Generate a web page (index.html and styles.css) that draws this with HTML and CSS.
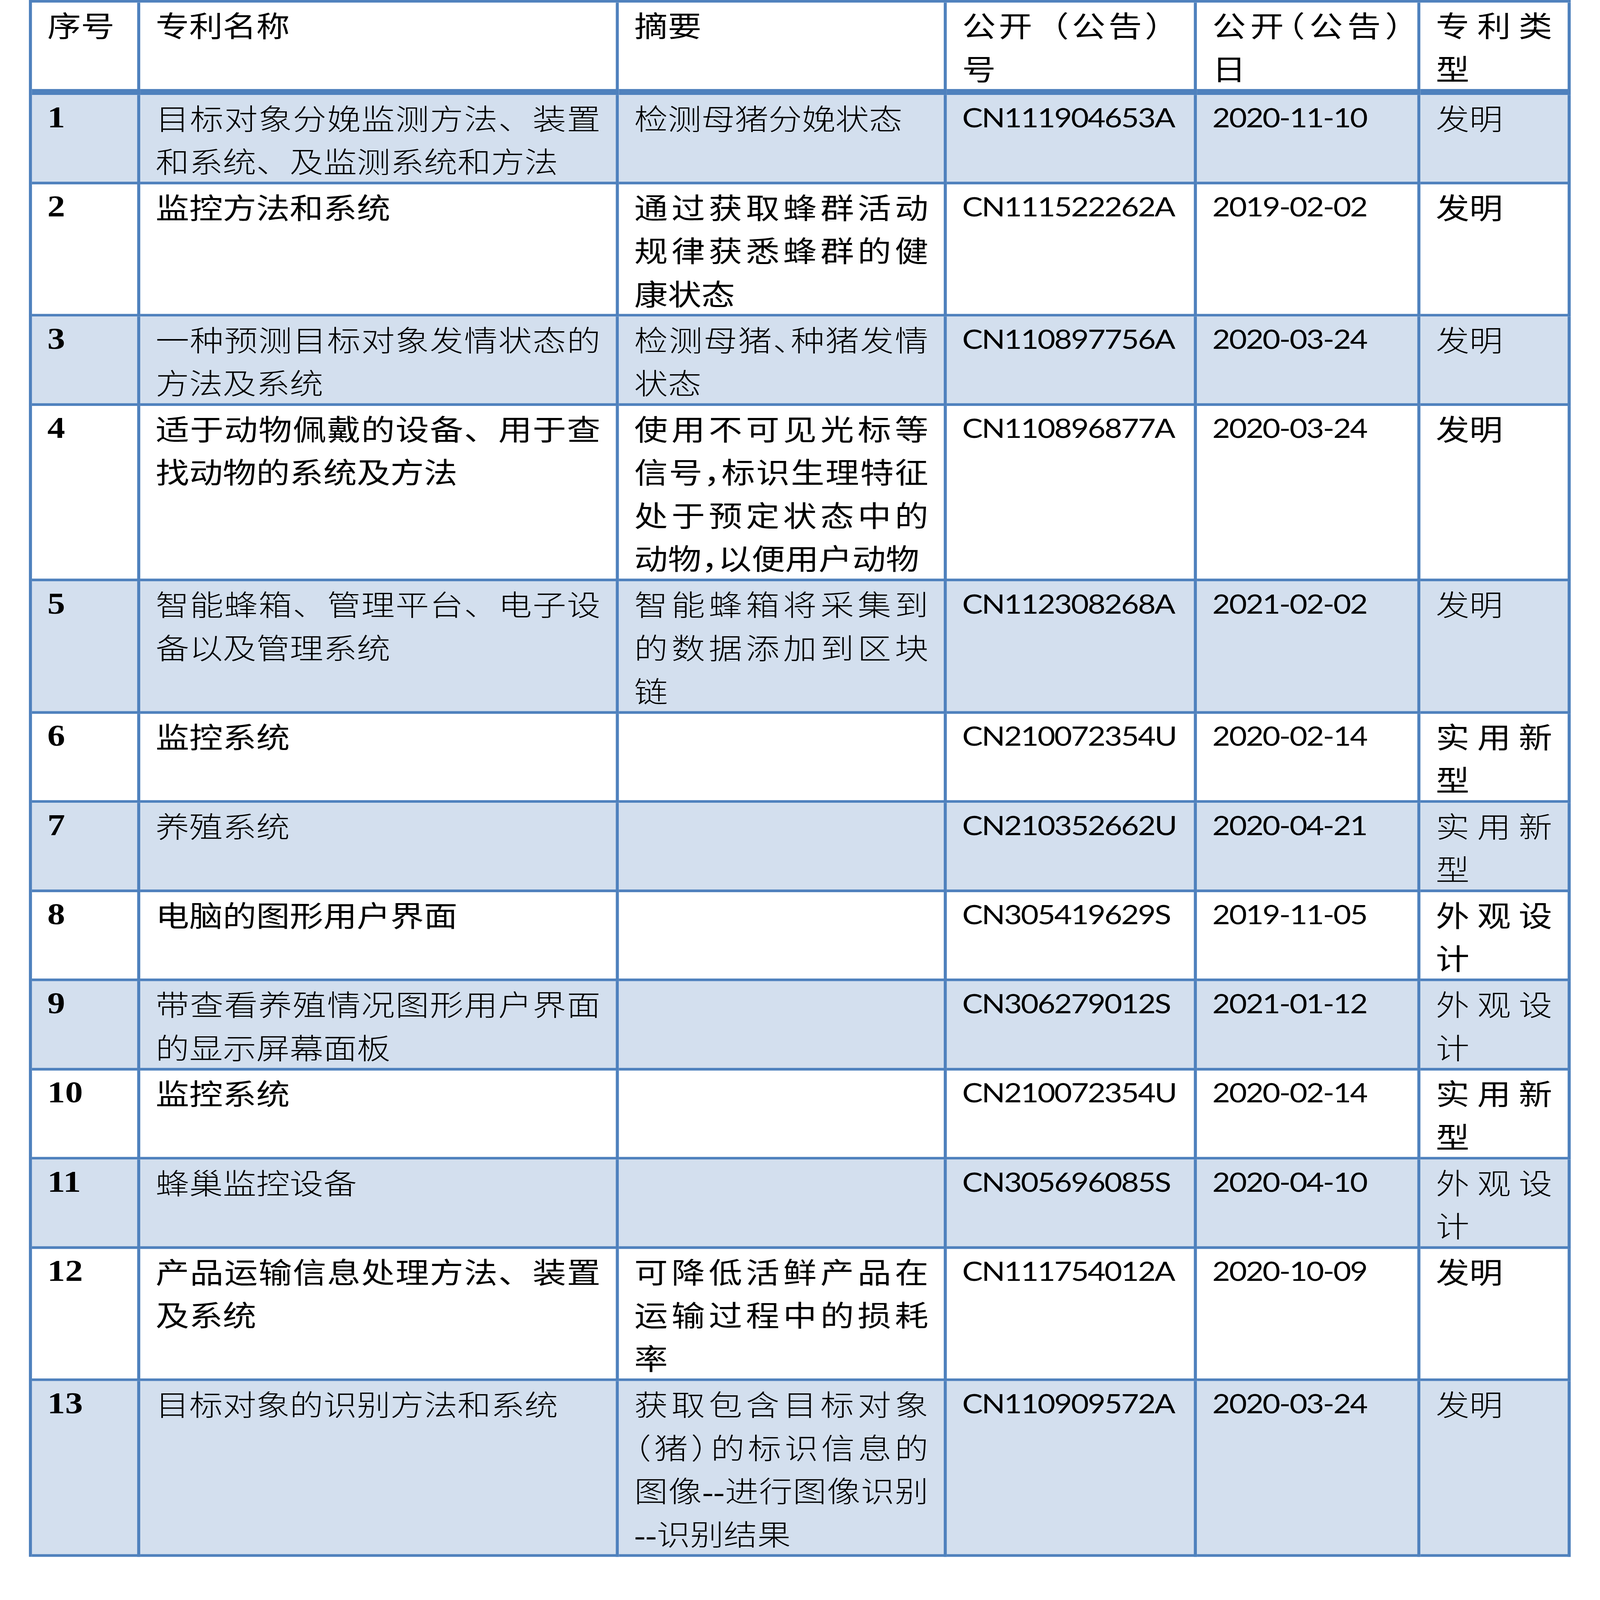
FILE: index.html
```html
<!DOCTYPE html>
<html lang="zh-CN">
<head>
<meta charset="utf-8">
<title>专利列表</title>
<link rel="stylesheet" href="styles.css">
</head>
<body>
<div class="viewport">
<div class="stage">
<table class="patents">
<colgroup>
<col class="c-no"><col class="c-name"><col class="c-abs"><col class="c-pub"><col class="c-date"><col class="c-type">
</colgroup>
<thead>
<tr>
<th class="zh">序号</th>
<th class="zh">专利名称</th>
<th class="zh">摘要</th>
<th class="zh">公开（公告）号</th>
<th class="zh halt">公开（公告）日</th>
<th class="zh">专利类型</th>
</tr>
</thead>
<tbody>
<tr class="shade">
<td class="num">1</td>
<td class="zh">目标对象分娩监测方法、装置和系统、及监测系统和方法</td>
<td class="zh">检测母猪分娩状态</td>
<td class="lat">CN111904653A</td>
<td class="lat">2020-11-10</td>
<td class="zh">发明</td>
</tr>
<tr>
<td class="num">2</td>
<td class="zh">监控方法和系统</td>
<td class="zh">通过获取蜂群活动规律获悉蜂群的健康状态</td>
<td class="lat">CN111522262A</td>
<td class="lat">2019-02-02</td>
<td class="zh">发明</td>
</tr>
<tr class="shade">
<td class="num">3</td>
<td class="zh">一种预测目标对象发情状态的方法及系统</td>
<td class="zh halt">检测母猪、种猪发情状态</td>
<td class="lat">CN110897756A</td>
<td class="lat">2020-03-24</td>
<td class="zh">发明</td>
</tr>
<tr>
<td class="num">4</td>
<td class="zh">适于动物佩戴的设备、用于查找动物的系统及方法</td>
<td class="zh halt">使用不可见光标等信号，标识生理特征处于预定状态中的动物，以便用户动物</td>
<td class="lat">CN110896877A</td>
<td class="lat">2020-03-24</td>
<td class="zh">发明</td>
</tr>
<tr class="shade">
<td class="num">5</td>
<td class="zh">智能蜂箱、管理平台、电子设备以及管理系统</td>
<td class="zh">智能蜂箱将采集到的数据添加到区块链</td>
<td class="lat">CN112308268A</td>
<td class="lat">2021-02-02</td>
<td class="zh">发明</td>
</tr>
<tr>
<td class="num">6</td>
<td class="zh">监控系统</td>
<td class="zh"></td>
<td class="lat">CN210072354U</td>
<td class="lat">2020-02-14</td>
<td class="zh">实用新型</td>
</tr>
<tr class="shade">
<td class="num">7</td>
<td class="zh">养殖系统</td>
<td class="zh"></td>
<td class="lat">CN210352662U</td>
<td class="lat">2020-04-21</td>
<td class="zh">实用新型</td>
</tr>
<tr>
<td class="num">8</td>
<td class="zh">电脑的图形用户界面</td>
<td class="zh"></td>
<td class="lat">CN305419629S</td>
<td class="lat">2019-11-05</td>
<td class="zh">外观设计</td>
</tr>
<tr class="shade">
<td class="num">9</td>
<td class="zh">带查看养殖情况图形用户界面的显示屏幕面板</td>
<td class="zh"></td>
<td class="lat">CN306279012S</td>
<td class="lat">2021-01-12</td>
<td class="zh">外观设计</td>
</tr>
<tr>
<td class="num">10</td>
<td class="zh">监控系统</td>
<td class="zh"></td>
<td class="lat">CN210072354U</td>
<td class="lat">2020-02-14</td>
<td class="zh">实用新型</td>
</tr>
<tr class="shade">
<td class="num">11</td>
<td class="zh">蜂巢监控设备</td>
<td class="zh"></td>
<td class="lat">CN305696085S</td>
<td class="lat">2020-04-10</td>
<td class="zh">外观设计</td>
</tr>
<tr>
<td class="num">12</td>
<td class="zh">产品运输信息处理方法、装置及系统</td>
<td class="zh">可降低活鲜产品在运输过程中的损耗率</td>
<td class="lat">CN111754012A</td>
<td class="lat">2020-10-09</td>
<td class="zh">发明</td>
</tr>
<tr class="shade">
<td class="num">13</td>
<td class="zh">目标对象的识别方法和系统</td>
<td class="zh halt">获取包含目标对象（猪）的标识信息的图像<span class="dash">--</span>进行图像识别<wbr><span class="dash">--</span>识别结果</td>
<td class="lat">CN110909572A</td>
<td class="lat">2020-03-24</td>
<td class="zh">发明</td>
</tr>
</tbody>
</table>
</div>
</div>
<script src="app.js"></script>
</body>
</html>
```

FILE: styles.css
```css
html, body {
  margin: 0;
  padding: 0;
  background: #ffffff;
  overflow: hidden;
}

/* The design is drawn on a 4152 x 4817 stage that is fitted to the window. */
.viewport {
  width: 100vw;
  height: 100vh;
  overflow: hidden;
}

.stage {
  width: 4152px;
  height: 4817px;
  padding-left: 75px;
  box-sizing: border-box;
  transform-origin: 0 0;
  transform: scale(var(--sx, 1), var(--sy, 1));
}

.patents {
  border-collapse: separate;
  border-spacing: 0;
  table-layout: fixed;
  width: 4001px;
  border-left: 8px solid #4f81bd;
  border-top: 8px solid #4f81bd;
}

.c-no { width: 281px; }
.c-name { width: 1242px; }
.c-abs { width: 851px; }
.c-pub { width: 649px; }
.c-date { width: 580px; }
.c-type { width: 390px; }

.patents th,
.patents td {
  border-right: 8px solid #4f81bd;
  border-bottom: 8px solid #4f81bd;
  padding: 0.5px 40px 0 40px;
  vertical-align: top;
  text-align: justify;
  line-height: 130px;
  font-weight: 400;
  color: #000000;
}

.patents th {
  padding-top: 0;
  border-bottom-width: 18px;
  background: #ffffff;
}

.shade td {
  background: #d3dfee;
}

.zh {
  font-family: "Noto Sans CJK SC", sans-serif;
  font-size: 87px;
}

.shade .zh {
  font-weight: 300;
}

.halt {
  font-feature-settings: "halt" 1;
}

.dash {
  font-family: "Liberation Serif", serif;
  line-height: 87px;
}

.lat {
  font-family: Lato, "Liberation Sans", sans-serif;
  font-size: 80px;
  letter-spacing: -3px;
}

.patents .num {
  font-family: "Liberation Serif", serif;
  font-size: 92px;
  font-weight: 700;
}
```

FILE: app.js
```js
(function () {
  var W = 4152, H = 4817;
  function fit() {
    var root = document.documentElement;
    root.style.setProperty('--sx', String(window.innerWidth / W));
    root.style.setProperty('--sy', String(window.innerHeight / H));
  }
  fit();
  window.addEventListener('resize', fit);
})();
```
